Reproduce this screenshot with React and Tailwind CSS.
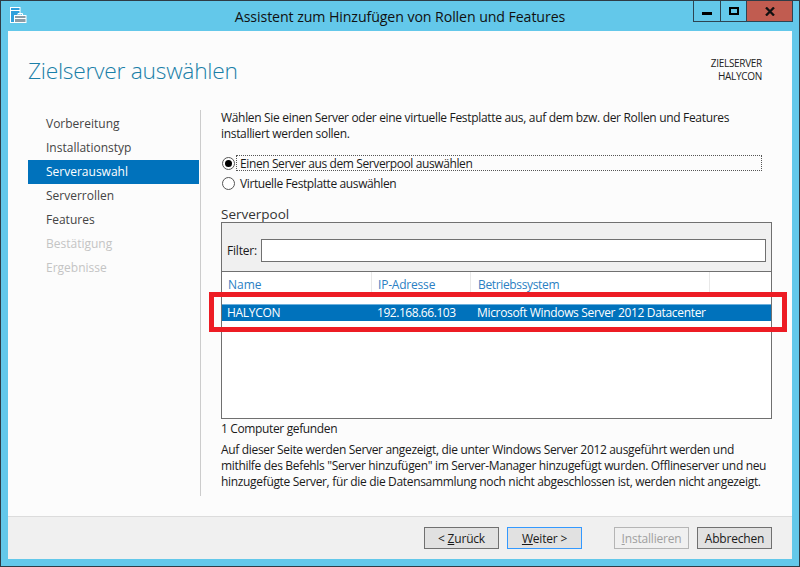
import React from "react";

const font = { fontFamily: '"Open Sans", "Noto Sans", sans-serif' };

const steps = [
  { label: "Vorbereitung" },
  { label: "Installationstyp" },
  { label: "Serverauswahl", active: true },
  { label: "Serverrollen" },
  { label: "Features" },
  { label: "Bestätigung", disabled: true },
  { label: "Ergebnisse", disabled: true },
];

function AppIcon() {
  return (
    <svg width="17" height="17" viewBox="0 0 17 17" className="block">
      <rect x=".5" y=".5" width="9.500" height="15" fill="#2f9fdc" stroke="#fff" />
      <path d="M1 3.500h9" stroke="#fff" />
      <rect x="4.500" y="8.500" width="11.500" height="7" fill="#8c9ca6" stroke="#fff" />
      <path d="M8 8.500V6.500h4.500v2M5 11.500h11" fill="none" stroke="#fff" />
    </svg>
  );
}

function Radio({ checked, label, focus }) {
  return (
    <div className="flex items-center h-[16px]">
      <div className="w-[13px] h-[13px] rounded-full border border-[#555] bg-white flex items-center justify-center shrink-0 ml-[1px]">
        {checked && <div className="w-[7px] h-[7px] rounded-full bg-black" />}
      </div>
      <div
        className={`ml-[1px] h-[16px] pl-[3px] leading-[15px] flex-1 border border-dotted ${
          focus ? "border-[#555]" : "border-transparent"
        }`}
      >
        {label}
      </div>
    </div>
  );
}

function Btn({ children, className = "" }) {
  return (
    <button
      className={`w-[75px] h-[22px] border bg-[#e1e1e1] text-[12px] leading-[20px] pt-[1px] ${className}`}
    >
      {children}
    </button>
  );
}

export default function App() {
  return (
    <div
      style={font}
      className="relative w-[800px] h-[567px] overflow-hidden border border-[#2e3c46] bg-[#63c8ea] text-[12px] text-[#1a1a1a] flex flex-col"
    >
      {/* title bar */}
      <div className="h-[30px] shrink-0 grid grid-cols-[1fr_auto_1fr]">
        <div className="pl-[9px] pt-[6px]">
          <AppIcon />
        </div>
        <div className="text-[14.200px] leading-[30px] pt-[1px] text-[#111] tracking-[-0.1px]">
          Assistent zum Hinzufügen von Rollen und Features
        </div>
        <div className="flex justify-end pr-[6px]">
          <div className="flex h-[21px] border border-t-0 border-[#2d4452]">
            <div className="w-[27px] border-r border-[#2d4452] flex items-center justify-center">
              <div className="w-[10px] h-[3px] bg-black mt-[5px]" />
            </div>
            <div className="w-[26px] border-r border-[#2d4452] flex items-center justify-center">
              <div className="w-[10px] h-[8px] border-2 border-black" />
            </div>
            <div className="w-[45px] bg-[#c15c50] flex items-center justify-center">
              <svg width="10" height="9" viewBox="0 0 10 9">
                <path d="M1 .5l8 8M9 .5l-8 8" stroke="#111" strokeWidth="2.300" />
              </svg>
            </div>
          </div>
        </div>
      </div>

      {/* content */}
      <div className="mx-[7px] h-[528px] bg-[#fcfcfc] flex flex-col">
        <div className="flex justify-between pl-[20px] pr-[30px] h-[79px]">
          <h1 className="text-[22.800px] font-light text-[#1a7fa8] mt-[23px] leading-[34px] tracking-[-0.27px]">
            Zielserver auswählen
          </h1>
          <div className="text-[10px] leading-[13px] text-right mt-[26px] text-[#222] tracking-[-0.3px]">
            <div>ZIELSERVER</div>
            <div>HALYCON</div>
          </div>
        </div>

        <div className="flex h-[386px]">
          {/* step list */}
          <div className="w-[193px] pl-[20px] pr-[1px] border-r border-[#cccccc] shrink-0 pt-[2px]">
            {steps.map((s) => (
              <div
                key={s.label}
                className={`h-[24px] pl-[18px] leading-[24px] ${
                  s.active
                    ? "bg-[#0072bc] text-white"
                    : s.disabled
                    ? "text-[#c4c4c4]"
                    : "text-[#444]"
                }`}
              >
                {s.label}
              </div>
            ))}
          </div>

          {/* main panel */}
          <div className="pl-[20px] w-[571px] shrink-0">
            <p className="leading-[16px] w-[530px] tracking-[-0.32px]">
              Wählen Sie einen Server oder eine virtuelle Festplatte aus, auf dem bzw. der Rollen und
              Features installiert werden sollen.
            </p>
            <div className="mt-[13px] tracking-[-0.39px]">
              <div className="pr-[10px]">
                <Radio checked focus label="Einen Server aus dem Serverpool auswählen" />
              </div>
              <div className="mt-[4px]">
                <Radio label="Virtuelle Festplatte auswählen" />
              </div>
            </div>
            <div className="text-[13.500px] leading-[18px] mt-[14px] text-[#333]">Serverpool</div>
            <div className="border border-[#707070] h-[197px] bg-white mt-[-1px] flex flex-col">
              <div className="h-[49px] bg-[#f0f0f0] border-b border-[#707070] flex items-end pb-[9px] pl-[5px] pr-[5px] shrink-0">
                <span className="mr-[4px] tracking-[-0.2px] leading-[23px]">Filter:</span>
                <input className="flex-1 h-[23px] border border-[#707070] bg-white" />
              </div>
              <div className="flex h-[22px] text-[#2b7fc3] leading-[26px]">
                <div className="w-[150px] pl-[6px] border-r border-[#e8e8e8]">Name</div>
                <div className="w-[99px] pl-[6px] border-r border-[#e8e8e8] tracking-[-0.2px]">IP-Adresse</div>
                <div className="w-[239px] pl-[7px] border-r border-[#e8e8e8] tracking-[-0.35px]">Betriebssystem</div>
              </div>
              <div className="h-[17px] mt-[10px] bg-[#0072bc] border-t border-[#6db0dc] flex text-white leading-[15px]">
                <div className="w-[155px] pl-[5px] tracking-[-0.3px]">HALYCON</div>
                <div className="w-[100px] tracking-[-0.45px]">192.168.66.103</div>
                <div className="tracking-[-0.33px]">Microsoft Windows Server 2012 Datacenter</div>
              </div>
            </div>
            <div className="leading-[16px] mt-[2px] tracking-[-0.36px]">1 Computer gefunden</div>
            <p className="leading-[16px] mt-[5px] w-[550px] tracking-[-0.33px]">
              Auf dieser Seite werden Server angezeigt, die unter Windows Server 2012 ausgeführt werden und
              mithilfe des Befehls "Server hinzufügen" im Server-Manager hinzugefügt wurden. Offlineserver und neu
              hinzugefügte Server, für die die Datensammlung noch nicht abgeschlossen ist, werden nicht angezeigt.
            </p>
          </div>
        </div>

        <div className="mt-auto h-[43px] bg-[#f0f0f0] border-t border-[#dcdcdc] flex items-start pt-[10px] pl-[416px] tracking-[-0.2px]">
          <Btn className="border-[#707070]">
            &lt; <u>Z</u>urück
          </Btn>
          <Btn className="ml-[8px] border-[#3399ff]">
            <u>W</u>eiter &gt;
          </Btn>
          <Btn className="ml-[32px] border-[#b5b5b5] bg-[#f0f0f0] text-[#a0a0a0]">
            <u>I</u>nstallieren
          </Btn>
          <Btn className="ml-[8px] border-[#707070]">Abbrechen</Btn>
        </div>
      </div>

      {/* red marker drawn over the screenshot */}
      <div className="absolute left-[208px] top-[291px] w-[578px] h-[40px] border-[5px] border-[#ed1c24] pointer-events-none" />
    </div>
  );
}
